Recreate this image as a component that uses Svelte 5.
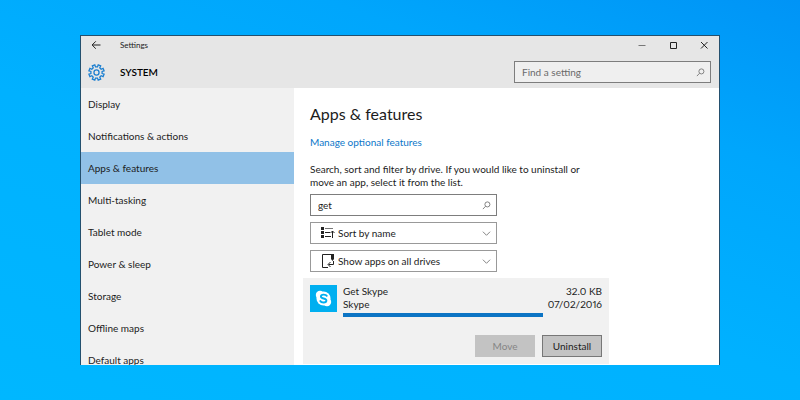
<script lang="ts">
  interface InstalledApp {
    readonly name: string;
    readonly publisher: string;
    readonly size: string;
    readonly installed: string;
    readonly share: number;
  }

  const sections = [
    "Display",
    "Notifications & actions",
    "Apps & features",
    "Multi-tasking",
    "Tablet mode",
    "Power & sleep",
    "Storage",
    "Offline maps",
    "Default apps",
  ];

  const apps: InstalledApp[] = [
    { name: "Get Skype", publisher: "Skype", size: "32.0 KB", installed: "07/02/2016", share: 100 },
  ];

  // eight teeth, alternating between the outer and the inner radius
  const gearPath = createGearPath(8, 11, 8);

  let activeSection = $state("Apps & features");
  let settingQuery = $state("");
  let appQuery = $state("get");
  let sortBy = $state("name");
  let drive = $state("all");

  const visibleApps = $derived(
    apps.filter((app) => app.name.toLowerCase().includes(appQuery.trim().toLowerCase())),
  );

  function createGearPath(teeth: number, outer: number, inner: number): string {
    const step = (Math.PI * 2) / teeth;
    const points: string[] = [];
    for (let i = 0; i < teeth; i++) {
      const mid = (i + 0.5) * step;
      const corners = [
        [inner, -0.28],
        [outer, -0.22],
        [outer, 0.22],
        [inner, 0.28],
      ];
      for (const [radius, offset] of corners) {
        const angle = mid + offset * step;
        points.push(`${(12 + radius * Math.cos(angle)).toFixed(2)} ${(12 + radius * Math.sin(angle)).toFixed(2)}`);
      }
    }
    return `M${points.join("L")}Z`;
  }
</script>

{#snippet searchIcon()}
  <svg class="glyph" viewBox="0 0 10 10" aria-hidden="true">
    <circle cx="6" cy="3.8" r="2.8" />
    <path d="M4 5.8 1 9" />
  </svg>
{/snippet}

{#snippet chevron()}
  <svg class="glyph" viewBox="0 0 10 10" aria-hidden="true">
    <path d="M1 3l4 4 4-4" />
  </svg>
{/snippet}

<div class="desktop">
  <div class="window">
    <header class="top">
      <div class="titlebar">
        <button type="button" class="caption" aria-label="Back">
          <svg viewBox="0 0 10 10" aria-hidden="true"><path d="M9.5 5H1.2M4.8 1.3 1.1 5l3.7 3.7" /></svg>
        </button>
        <span class="app-title">Settings</span>
        <div class="controls">
          <button type="button" class="caption" aria-label="Minimise">
            <svg viewBox="0 0 10 10" aria-hidden="true"><path class="soft" d="M1.5 5.5h7" /></svg>
          </button>
          <button type="button" class="caption" aria-label="Maximise">
            <svg viewBox="0 0 10 10" aria-hidden="true"><path d="M2.5 2.5h6v6h-6z" /></svg>
          </button>
          <button type="button" class="caption" aria-label="Close">
            <svg viewBox="0 0 10 10" aria-hidden="true"><path d="M2 2l6.5 6.5M8.5 2 2 8.5" /></svg>
          </button>
        </div>
      </div>

      <div class="heading">
        <svg class="gear" viewBox="0 0 24 24" aria-hidden="true">
          <path d={gearPath} />
          <circle cx="12" cy="12" r="3.6" />
        </svg>
        <h1>SYSTEM</h1>
        <div class="box find">
          <input type="text" aria-label="Find a setting" placeholder="Find a setting" bind:value={settingQuery} />
          {@render searchIcon()}
        </div>
      </div>
    </header>

    <div class="body">
      <nav class="nav" aria-label="System">
        {#each sections as section (section)}
          <button
            type="button"
            class="nav-item"
            data-active={section === activeSection}
            onclick={() => (activeSection = section)}
          >
            {section}
          </button>
        {/each}
      </nav>

      <main class="content">
        <h2>Apps &amp; features</h2>
        <a class="manage" href="#optional">Manage optional features</a>
        <p class="intro">
          Search, sort and filter by drive. If you would like to uninstall or move an app, select it from the list.
        </p>

        <div class="filters">
          <div class="box">
            <input type="text" aria-label="Search apps" bind:value={appQuery} />
            {@render searchIcon()}
          </div>

          <div class="box pick">
            <svg class="option-icon" viewBox="0 0 14 14" aria-hidden="true">
              <path class="solid" d="M0 1h3v3H0zM0 5h3v3H0zM0 9h3v3H0z" />
              <path class="soft" d="M4 2.5h8" />
              <path d="M4 6.5h5M4 10.5h6M11.5 12V5M9.5 7l2-2 2 2" />
            </svg>
            <select aria-label="Sort" bind:value={sortBy}>
              <option value="name">Sort by name</option>
              <option value="size">Sort by size</option>
              <option value="date">Sort by install date</option>
            </select>
            {@render chevron()}
          </div>

          <div class="box pick">
            <svg class="option-icon" viewBox="0 0 14 14" aria-hidden="true">
              <path d="M7 13.5H1.5V.5h11" />
              <path class="solid" d="M10 0h3v5l-1.5 2L10 5z" />
              <path d="M12.5 7v3.5h-5M9.5 8 7 10.5 9.5 13" />
            </svg>
            <select aria-label="Drive" bind:value={drive}>
              <option value="all">Show apps on all drives</option>
              <option value="c">This PC (C:)</option>
            </select>
            {@render chevron()}
          </div>
        </div>

        {#each visibleApps as app (app.name)}
          <article class="card">
            <div class="summary">
              <svg class="logo" viewBox="0 0 27 27" aria-hidden="true">
                <rect width="27" height="27" fill="#00aff0" />
                <circle cx="13.5" cy="13.5" r="7" fill="#fff" />
                <circle cx="10" cy="10" r="4.2" fill="#fff" />
                <circle cx="17" cy="17" r="4.2" fill="#fff" />
                <path
                  d="M16.7 10.8C15.9 9.3 11 8.9 10.9 11.5c0 2.6 5.5 1.3 5.5 4 0 2.7-5.2 2.4-6.1.5"
                  fill="none"
                  stroke="#00aff0"
                  stroke-width="1.9"
                  stroke-linecap="round"
                />
              </svg>
              <div class="info">
                <div>{app.name}</div>
                <div>{app.publisher}</div>
                <div class="track"><div class="bar" style:width="{app.share}%"></div></div>
              </div>
              <div class="meta">
                <div>{app.size}</div>
                <div>{app.installed}</div>
              </div>
            </div>
            <div class="actions">
              <button type="button" class="action" disabled>Move</button>
              <button type="button" class="action">Uninstall</button>
            </div>
          </article>
        {/each}
      </main>
    </div>
  </div>
</div>

<style>
  :global(body) {
    margin: 0;
  }

  .desktop {
    box-sizing: border-box;
    height: 100vh;
    padding: 35px 10%;
    background: linear-gradient(20deg, #00b7ff 0%, #00b1ff 45%, #00a6fc 75%, #0094f6 100%);
    font-family: Lato, "Noto Sans", sans-serif;
    font-size: 10px;
    line-height: 13px;
    color: #1c1c1c;
  }

  .window {
    box-sizing: border-box;
    height: 100%;
    display: flex;
    flex-direction: column;
    overflow: hidden;
    border: 1px solid #24506e;
    border-bottom: 0;
    background: #fff;
  }

  button,
  input,
  select {
    font: inherit;
    color: inherit;
    margin: 0;
    padding: 0;
    border: 0;
    border-radius: 0;
    background: none;
  }

  svg {
    flex: none;
    fill: none;
    stroke: #222;
  }

  .top {
    flex: none;
    background: #e6e6e6;
  }

  .titlebar {
    display: flex;
    align-items: center;
    height: 18px;
    padding: 0 10px;
  }

  .caption {
    display: flex;
    width: 10px;
    height: 10px;
  }

  .caption svg {
    width: 10px;
    height: 10px;
  }

  .soft {
    stroke: #777;
  }

  .app-title {
    margin-left: 19px;
    font-size: 8px;
  }

  .controls {
    display: flex;
    gap: 21px;
    margin-left: auto;
  }

  .heading {
    display: flex;
    align-items: center;
    height: 32px;
    padding: 2px 8px 0 7px;
  }

  .gear {
    width: 17px;
    height: 17px;
    stroke: #1c7fd0;
    stroke-width: 1.8;
  }

  h1 {
    margin: 0 auto 0 15px;
    font-size: 10px;
    font-weight: 600;
    color: #000;
  }

  .box {
    box-sizing: border-box;
    display: flex;
    align-items: center;
    height: 22px;
    padding: 0 5px 0 7px;
    border: 1px solid #7d7d7d;
    background: #fff;
  }

  .find {
    flex: 0 1 197px;
    background: #efefef;
  }

  .box input,
  .box select {
    flex: 1;
    min-width: 0;
    height: 100%;
    outline: none;
    appearance: none;
  }

  .box input::placeholder {
    color: #6a6a6a;
    opacity: 1;
  }

  .glyph {
    width: 9px;
    height: 9px;
    stroke: #777;
    pointer-events: none;
  }

  .body {
    flex: 1;
    min-height: 0;
    display: flex;
  }

  .nav {
    flex: 0 0 213px;
    background: #f1f1f1;
  }

  .nav-item {
    display: block;
    width: 100%;
    height: 32px;
    padding: 1px 7px 0;
    text-align: left;
  }

  .nav-item[data-active="true"] {
    background: #91c1e7;
  }

  .content {
    flex: 1;
    min-width: 0;
    padding: 16px 16px 0;
  }

  h2 {
    margin: 0;
    font-size: 16px;
    line-height: 20px;
    font-weight: 400;
  }

  .manage {
    display: block;
    margin-top: 12px;
    color: #0c77c9;
    text-decoration: none;
  }

  .intro {
    max-width: 286px;
    margin: 14px 0 5px;
  }

  .filters {
    display: grid;
    gap: 6px;
    max-width: 187px;
  }

  .pick {
    padding-left: 10px;
    border-color: #999;
  }

  .option-icon {
    width: 14px;
    height: 14px;
    margin-right: 3px;
  }

  .solid {
    fill: #222;
    stroke: none;
  }

  .card {
    box-sizing: border-box;
    max-width: 306px;
    margin: 6px 0 0 -7px;
    padding: 7px;
    background: #f1f1f1;
  }

  .summary {
    display: flex;
  }

  .logo {
    width: 27px;
    height: 27px;
    stroke: none;
  }

  .info {
    flex: 1;
    min-width: 0;
    margin: 0 5px 0 6px;
  }

  .track {
    height: 4px;
    margin-top: 2px;
  }

  .bar {
    height: 100%;
    background: #0c74c4;
  }

  .meta {
    text-align: right;
    font-variant-numeric: proportional-nums;
  }

  .actions {
    display: flex;
    justify-content: flex-end;
    gap: 7px;
    margin-top: 18px;
  }

  .action {
    box-sizing: border-box;
    width: 60px;
    height: 22px;
    border: 1px solid #777;
    background: #c3c3c3;
  }

  .action:disabled {
    border-color: #c3c3c3;
    color: #858585;
  }
</style>
